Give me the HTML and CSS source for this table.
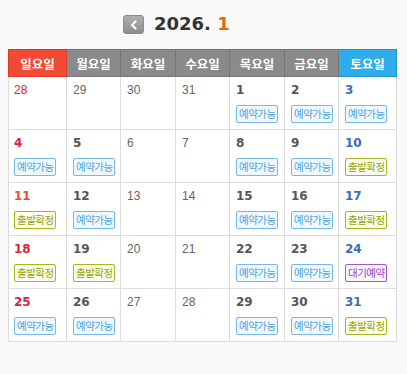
FILE: index.html
```html
<!DOCTYPE html>
<html lang="ko">
<head>
<meta charset="utf-8">
<link rel="stylesheet" href="styles.css">
</head>
<body>
<div class="head">
  <button class="prev" type="button" aria-label="이전 달">
    <svg width="10" height="10" viewBox="0 0 10 10"><polyline points="6.5,1.5 3,5 6.5,8.5" fill="none" stroke="#fff" stroke-width="2.2" stroke-linecap="round" stroke-linejoin="round"/></svg>
  </button>
  <div class="title">2026. <span class="mon">1</span></div>
</div>
<div class="cal">
  <div class="hd sun">일요일</div>
  <div class="hd">월요일</div>
  <div class="hd">화요일</div>
  <div class="hd">수요일</div>
  <div class="hd">목요일</div>
  <div class="hd">금요일</div>
  <div class="hd sat">토요일</div>

  <div class="cell first"><span class="d sun">28</span></div>
  <div class="cell"><span class="d">29</span></div>
  <div class="cell"><span class="d">30</span></div>
  <div class="cell"><span class="d">31</span></div>
  <div class="cell"><span class="d b">1</span><span class="bd ok">예약가능</span></div>
  <div class="cell"><span class="d b">2</span><span class="bd ok">예약가능</span></div>
  <div class="cell"><span class="d b sat">3</span><span class="bd ok">예약가능</span></div>

  <div class="cell first"><span class="d b sun">4</span><span class="bd ok">예약가능</span></div>
  <div class="cell"><span class="d b">5</span><span class="bd ok">예약가능</span></div>
  <div class="cell"><span class="d">6</span></div>
  <div class="cell"><span class="d">7</span></div>
  <div class="cell"><span class="d b">8</span><span class="bd ok">예약가능</span></div>
  <div class="cell"><span class="d b">9</span><span class="bd ok">예약가능</span></div>
  <div class="cell"><span class="d b sat">10</span><span class="bd go">출발확정</span></div>

  <div class="cell first"><span class="d b today">11</span><span class="bd go">출발확정</span></div>
  <div class="cell"><span class="d b">12</span><span class="bd ok">예약가능</span></div>
  <div class="cell"><span class="d">13</span></div>
  <div class="cell"><span class="d">14</span></div>
  <div class="cell"><span class="d b">15</span><span class="bd ok">예약가능</span></div>
  <div class="cell"><span class="d b">16</span><span class="bd ok">예약가능</span></div>
  <div class="cell"><span class="d b sat">17</span><span class="bd go">출발확정</span></div>

  <div class="cell first"><span class="d b sun">18</span><span class="bd go">출발확정</span></div>
  <div class="cell"><span class="d b">19</span><span class="bd go">출발확정</span></div>
  <div class="cell"><span class="d">20</span></div>
  <div class="cell"><span class="d">21</span></div>
  <div class="cell"><span class="d b">22</span><span class="bd ok">예약가능</span></div>
  <div class="cell"><span class="d b">23</span><span class="bd ok">예약가능</span></div>
  <div class="cell"><span class="d b sat">24</span><span class="bd wait">대기예약</span></div>

  <div class="cell first"><span class="d b sun">25</span><span class="bd ok">예약가능</span></div>
  <div class="cell"><span class="d b">26</span><span class="bd ok">예약가능</span></div>
  <div class="cell"><span class="d">27</span></div>
  <div class="cell"><span class="d">28</span></div>
  <div class="cell"><span class="d b">29</span><span class="bd ok">예약가능</span></div>
  <div class="cell"><span class="d b">30</span><span class="bd ok">예약가능</span></div>
  <div class="cell"><span class="d b sat">31</span><span class="bd go">출발확정</span></div>
</div>
</body>
</html>
```
FILE: styles.css
```css
html, body { margin: 0; padding: 0; }
body {
  background: #f9f9f9;
  padding: 8px;
  font-family: "Liberation Sans", "Noto Sans CJK KR", sans-serif;
}
.head {
  height: 41px;
  box-sizing: border-box;
  padding: 7px 0 0 115px;
  display: flex;
  align-items: flex-start;
  gap: 10px;
}
.prev {
  width: 21px;
  height: 19px;
  padding: 0;
  margin: 0;
  border: 1px solid #8a8a8a;
  border-radius: 3px;
  background: linear-gradient(#b0b0b0, #8c8c8c);
  display: flex;
  align-items: center;
  justify-content: center;
}
.prev svg { display: block; }
.title {
  font-family: "DejaVu Sans", "Noto Sans CJK KR", sans-serif;
  font-weight: bold;
  font-size: 18px;
  line-height: 20px;
  margin-top: -1px;
  color: #333;
  white-space: pre;
}
.title .mon { color: #e8680e; }

.cal {
  width: 389px;
  display: grid;
  grid-template-columns: 59px 54px 55px 54px 55px 54px 58px;
  grid-auto-rows: 53px;
  grid-template-rows: 28px;
}
.hd {
  box-sizing: border-box;
  height: 28px;
  background: #8a8a8a;
  border: 1px solid #777;
  border-left: 0;
  color: #fff;
  font-family: "Noto Sans CJK KR", sans-serif;
  font-weight: bold;
  font-size: 12.5px;
  display: flex;
  align-items: center;
  justify-content: center;
}
.hd.sun {
  background: #f24a35;
  border-color: #d93b29;
  border-left: 1px solid #d93b29;
}
.hd.sat {
  background: #2fadea;
  border-color: #1f94d2;
}
.cell {
  box-sizing: border-box;
  background: #fff;
  border-right: 1px solid #dcdcdc;
  border-bottom: 1px solid #dcdcdc;
  padding: 5px 0 0 6px;
  display: flex;
  flex-direction: column;
  align-items: flex-start;
}
.cell.first { border-left: 1px solid #dcdcdc; padding-left: 5px; }
.d {
  font-size: 12px;
  line-height: 16px;
  color: #666;
}
.d.b {
  font-family: "DejaVu Sans", sans-serif;
  font-weight: bold;
  color: #555;
}
.d.sun { color: #dc2040; }
.d.sat { color: #3b6db5; }
.d.today { color: #f24a24; }
.bd {
  margin-top: 7px;
  display: inline-block;
  font-family: "Noto Sans CJK KR", sans-serif;
  font-size: 10.5px;
  line-height: 16px;
  letter-spacing: -0.5px;
  padding: 0 1px 0 2px;
  border: 1px solid;
  border-radius: 2px;
}
.bd.ok { color: #4ea4df; border-color: #74b9ea; background: #eff8fe; }
.bd.go { color: #93a800; border-color: #a3b81c; background: #fcfdf0; }
.bd.wait { color: #9a3fc8; border-color: #a455d4; background: #fbf6fd; }
```
